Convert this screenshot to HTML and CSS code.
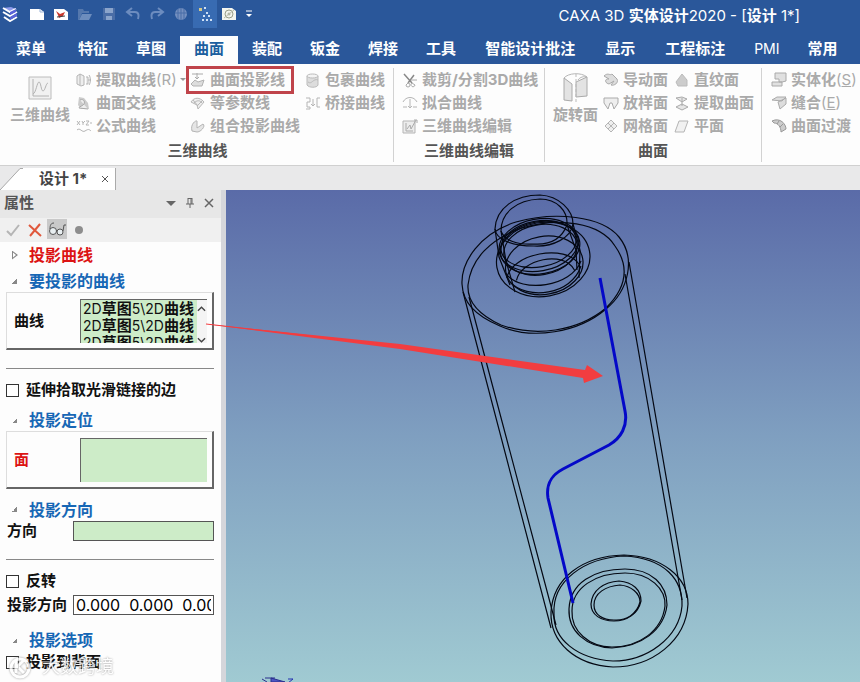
FILE: index.html
```
<!DOCTYPE html>
<html lang="zh-CN">
<head>
<meta charset="utf-8">
<title>CAXA 3D 实体设计2020</title>
<link rel="stylesheet" href="styles.css">
</head>
<body>
<header class="top">
  <div class="titlebar">
    <div class="quick">
      <svg class="logo" viewBox="0 0 16 16"><path d="M1 2l7 4 6-3-5-2z" fill="#8e9bec"/><path d="M1 2l7 4 6-3M1 6l7 4 7-4M2 11l6 4 7-4" fill="none" stroke="#fff" stroke-width="2"/><path d="M8 6l6-3v3l-6 3zM8 11l7-4v3l-7 4z" fill="#5a63d8"/></svg>
      <button aria-label="新建"><svg viewBox="0 0 16 16"><path d="M1 3h10l4 3v8H1z" fill="#fff"/><path d="M11 3v3h4" fill="none" stroke="#9db4d8"/></svg></button>
      <button aria-label="新建图纸"><svg viewBox="0 0 16 16"><path d="M1 3h10l4 3v8H1z" fill="#fff"/><path d="M3 5l4 3 5-2-2 4-4 2-1-3z" fill="#c8372d"/><path d="M4 11l8-1" stroke="#444"/></svg></button>
      <button aria-label="打开"><svg viewBox="0 0 16 16"><path d="M1 14V3h5l1 2h5v2H5l-3 7z" fill="#5578ad"/><path d="M5 8h10l-3 6H2z" fill="#6d8dbd"/></svg></button>
      <button aria-label="保存"><svg viewBox="0 0 16 16"><path d="M2 2h12v12H2z" fill="#4a6da6"/><path d="M4 2h8v5H4zM5 10h6v4H5z" fill="#8ba4cb"/></svg></button>
      <button aria-label="撤销"><svg viewBox="0 0 16 16"><path d="M7 2L2 6l5 4M2 6h8c4 0 4 4 3 7" fill="none" stroke="#6c8cbf" stroke-width="2"/></svg></button>
      <button aria-label="重做"><svg viewBox="0 0 16 16"><path d="M9 2l5 4-5 4M14 6H6c-4 0-4 4-3 7" fill="none" stroke="#6c8cbf" stroke-width="2"/></svg></button>
      <button aria-label="渲染"><svg viewBox="0 0 16 16"><circle cx="8" cy="8" r="6" fill="#7590c0"/><path d="M2 7h12M8 2v12M5 3v10M11 3v10" stroke="#486ca7"/></svg></button>
      <button class="lit" aria-label="捕捉"><svg viewBox="0 0 16 16"><path d="M2 2h3v3H2z" fill="#d5c98a"/><path d="M7 1h2v2H7zM9 6h2v2H9zM6 9h2v2H6zM11 9h2v2h-2zM5 13h2v2H5zM9 13h2v2H9zM13 13h2v2h-2z" fill="#cfe0f5"/></svg></button>
      <button aria-label="图纸"><svg viewBox="0 0 16 16"><path d="M1 2h10l4 3v9H1z" fill="#f4f5ee"/><circle cx="8" cy="8" r="4" fill="none" stroke="#9ba08c"/><circle cx="8" cy="8" r="1" fill="none" stroke="#9ba08c"/><path d="M3 12l10-8" stroke="#b9bca9"/></svg></button>
      <button class="more" aria-label="更多"><svg viewBox="0 0 16 16"><path d="M5 5h6" stroke="#fff" stroke-width="1"/><path d="M5 8h6l-3 3z" fill="#fff"/></svg></button>
    </div>
    <h1>CAXA 3D <b>实体设计</b>2020 - [<b>设计</b> 1*]</h1>
  </div>
  <nav class="tabs">
    <a href="#" class="menu">菜单</a><a href="#">特征</a><a href="#">草图</a><a href="#" class="on">曲面</a><a href="#">装配</a><a href="#">钣金</a><a href="#">焊接</a><a href="#">工具</a><a href="#" class="wide">智能设计批注</a><a href="#" class="wide">显示</a><a href="#" class="wide">工程标注</a><a href="#" class="latin">PMI</a><a href="#">常用</a>
  </nav>
</header>

<section class="ribbon">
  <div class="group g1">
    <div class="tools">
      <button class="big"><svg viewBox="0 0 24 24"><path d="M1 1h22v22H1z" fill="#f1f1f1" stroke="#bcbcbc"/><path d="M5 3v17h16M5 18c3-1 4-12 6-12s2 9 4 9 3-8 5-8" fill="none" stroke="#b2b2b2"/></svg>三维曲线</button>
      <div class="col c1">
        <button><svg viewBox="0 0 16 16"><path d="M1 4l3-2 4 2v9l-3 1-4-2zM4 2v11M10 5h2v7h-2M12 8h3M13 3c2 3 2 7 0 10" fill="#eee" stroke="#b5b5b5"/></svg>提取曲线<i>(R)</i><span class="drop"></span></button>
        <button><svg viewBox="0 0 16 16"><path d="M3 2l5 1 4 5 1 6H5l-3-4z" fill="#ccc"/><path d="M4 5c4-2 6 3 3 5s-4 2-4 3l9 1" fill="#eee" stroke="#aaa"/></svg>曲面交线</button>
        <button><svg viewBox="0 0 16 16"><path d="M1 3l3 4M4 3L1 7M6 3l1 2 2-2M7 5v2M10 3h3l-3 4h3M14 5h2M1 12c3-3 5 3 8 1s4-2 6 0" fill="none" stroke="#b5b5b5"/></svg>公式曲线</button>
      </div>
      <div class="col c2">
        <button class="marked"><svg viewBox="0 0 16 16"><path d="M2 2h11M7 1v6M5 5l2 2 2-2" fill="none" stroke="#aaa"/><path d="M1 12l4-4 3 2 6-2-2 6H3z" fill="#ddd" stroke="#b2b2b2"/></svg>曲面投影线</button>
        <button><svg viewBox="0 0 16 16"><path d="M1 7c3-5 9-5 13 0l-6 7-1-4zM3 5l5 6M13 5l-6 6M4 8c3-3 6-3 8 0" fill="#eee" stroke="#b8b8b8"/></svg>等参数线</button>
        <button><svg viewBox="0 0 16 16"><path d="M2 13c-2-7 4-11 5-10v7l6-4c3 2-2 8-6 8z" fill="#e5e5e5" stroke="#b5b5b5"/></svg>组合投影曲线</button>
      </div>
      <div class="col c3">
        <button><svg viewBox="0 0 16 16"><path d="M2 4v9c2 3 10 3 11 0V4" fill="#ddd" stroke="#bbb"/><ellipse cx="7.500" cy="4" rx="5.500" ry="2" fill="#f4f4f4" stroke="#bbb"/><path d="M3 10c4 3 5-4 10-2" fill="none" stroke="#bbb"/></svg>包裹曲线</button>
        <button><svg viewBox="0 0 16 16"><path d="M1 3h4v4H2v5h3v2H1M15 3h-3v9h3M8 4v7M6 9l2 2 2-2" fill="none" stroke="#b5b5b5"/></svg>桥接曲线</button>
      </div>
    </div>
    <h2>三维曲线</h2>
  </div>
  <div class="group g2">
    <div class="tools">
      <div class="col">
        <button><svg viewBox="0 0 16 16"><path d="M2 2l8 9M12 3L6 11" stroke="#888" stroke-width="1.500"/><path d="M10 11a2 2 0 1 0 3 2zM6 11a2 2 0 1 1-2 2zM9 8h6" fill="none" stroke="#aaa"/></svg>裁剪/分割3D曲线</button>
        <button><svg viewBox="0 0 16 16"><path d="M1 7c3-6 11-6 14 0M8 4v9M6 11l2 2 2-2M1 12h4M11 12h4" fill="none" stroke="#b5b5b5"/></svg>拟合曲线</button>
        <button><svg viewBox="0 0 16 16"><path d="M1 3h12v12H1z" fill="#ececec" stroke="#b5b5b5"/><path d="M4 5v8h7M5 11l3-4 1 4 5-9M12 2h3v3" fill="none" stroke="#aaa"/></svg>三维曲线编辑</button>
      </div>
    </div>
    <h2>三维曲线编辑</h2>
  </div>
  <div class="group g3">
    <div class="tools">
      <button class="big"><svg class="tall" viewBox="0 0 26 30"><path d="M1 5v22l8 1V11zM13 9l11-5v19l-11 1z" fill="#e3e3e3" stroke="#aaa"/><path d="M1 5c4-5 17-6 23-1-3-1-7 0-9 3" fill="none" stroke="#b5b5b5"/><path d="M13 1v28" stroke="#bbb" stroke-dasharray="3 2"/></svg>旋转面</button>
      <div class="col c4">
        <button><svg viewBox="0 0 16 16"><path d="M1 4c4-4 6 0 8-2l5 5c2 4-3 7-6 6l3-4-5 3c-5-1-4-6 0-5z" fill="#ddd" stroke="#aaa"/></svg>导动面</button>
        <button><svg viewBox="0 0 16 16"><path d="M1 3h14v5l-4 6-2-6H7l-2 6-4-6z" fill="#eee" stroke="#aaa"/></svg>放样面</button>
        <button><svg viewBox="0 0 16 16"><path d="M8 2l6 6-6 6-6-6zM5 5l6 6M11 5l-6 6" fill="#eee" stroke="#b5b5b5"/></svg>网格面</button>
      </div>
      <div class="col c5">
        <button><svg viewBox="0 0 16 16"><path d="M2 10l6-8 5 6v6H4z" fill="#ccc" stroke="#bbb"/></svg>直纹面</button>
        <button><svg viewBox="0 0 16 16"><path d="M2 3l6-1 5 2-5 3zM2 12l6-3 6 3-6 3zM8 3v8" fill="#e6e6e6" stroke="#aaa"/></svg>提取曲面</button>
        <button><svg viewBox="0 0 16 16"><path d="M5 3h9l-4 11H1z" fill="#f1f1f1" stroke="#b5b5b5"/></svg>平面</button>
      </div>
    </div>
    <h2>曲面</h2>
  </div>
  <div class="group g4">
    <div class="tools">
      <div class="col">
        <button><svg viewBox="0 0 16 16"><path d="M4 1h11v8l-4 1H8V7H4zM1 10h10v4H1z" fill="#e0e0e0" stroke="#aaa"/></svg>实体化<i>(<u>S</u>)</i></button>
        <button><svg viewBox="0 0 16 16"><path d="M1 5l5-3h9l-4 4zM7 7l8-4v6l-6 5z" fill="#ddd" stroke="#aaa"/></svg>缝合<i>(<u>E</u>)</i></button>
        <button><svg viewBox="0 0 16 16"><path d="M1 3c8-4 14 3 14 8l-5 3c0-5-3-9-7-9zM8 3L6 6M12 6L9 9" fill="#ccc" stroke="#999"/></svg>曲面过渡</button>
      </div>
    </div>
  </div>
</section>

<div class="docs">
  <div class="doc"><svg class="slant" viewBox="0 0 23 22"><path d="M0 22L20 1h3v21z" fill="#fff"/><path d="M0 22L20 .5h3" fill="none" stroke="#aaa"/></svg><span>设计 1*</span><button aria-label="关闭文档"><svg viewBox="0 0 8 8"><path d="M1 1l6 6M7 1L1 7" stroke="#555"/></svg></button></div>
</div>

<main class="work">
  <aside class="panel">
    <div class="phead">
      <h2>属性</h2>
      <button aria-label="菜单"><svg viewBox="0 0 10 10"><path d="M0 3h10L5 8z" fill="#666"/></svg></button>
      <button aria-label="固定"><svg viewBox="0 0 10 10"><path d="M3 0v6M3 .5h4M7 0v6M6 0v6M1 6h8M5 6v4" fill="none" stroke="#666"/></svg></button>
      <button aria-label="关闭"><svg viewBox="0 0 10 10"><path d="M1 1l8 8M9 1L1 9" stroke="#666" stroke-width="1.500"/></svg></button>
    </div>
    <div class="pbar">
      <button aria-label="确定"><svg viewBox="0 0 20 20"><path d="M4 11l4 4 8-10" fill="none" stroke="#b5b5b5" stroke-width="2"/></svg></button>
      <button aria-label="取消"><svg viewBox="0 0 20 20"><path d="M4 5l12 11M15 4L5 16" stroke="#e0583c" stroke-width="2"/></svg></button>
      <button class="pressed" aria-label="预览"><svg viewBox="0 0 20 20"><circle cx="6" cy="12" r="3.500" fill="#e8eef0" stroke="#555"/><circle cx="13" cy="13" r="3" fill="#e8eef0" stroke="#555"/><path d="M3 10c0-4 1-6 4-6M16 12l1-6 2 0M9 12l1 0" fill="none" stroke="#555"/></svg></button>
      <button aria-label="应用"><svg viewBox="0 0 20 20"><circle cx="10" cy="10" r="4" fill="#8d8d8d"/></svg></button>
    </div>
    <form class="props">
      <h3 class="closed red">投影曲线</h3>
      <h3>要投影的曲线</h3>
      <fieldset class="box">
        <label id="curves">曲线</label>
        <div class="list" role="listbox" aria-labelledby="curves" tabindex="0">
          <div class="items"><div>2D<b>草图</b>5\2D<b>曲线</b></div><div>2D<b>草图</b>5\2D<b>曲线</b></div><div>2D<b>草图</b>5\2D<b>曲线</b></div></div>
          <div class="scroll"><svg viewBox="0 0 10 6"><path d="M1 5l4-4 4 4" fill="none" stroke="#444" stroke-width="1.500"/></svg><svg viewBox="0 0 10 6"><path d="M1 1l4 4 4-4" fill="none" stroke="#444" stroke-width="1.500"/></svg></div>
        </div>
      </fieldset>
      <hr>
      <label class="check"><input type="checkbox">延伸拾取光滑链接的边</label>
      <h3>投影定位</h3>
      <fieldset class="box">
        <label class="red" for="face">面</label>
        <textarea class="face" id="face"></textarea>
      </fieldset>
      <h3 class="gap">投影方向</h3>
      <div class="field"><label for="dir">方向</label><input class="green" id="dir" type="text"></div>
      <hr>
      <label class="check tight"><input type="checkbox">反转</label>
      <div class="field"><label for="vec">投影方向</label><input id="vec" type="text" value="0.000  0.000  0.000"></div>
      <h3 class="gap options">投影选项</h3>
      <label class="check tight"><input type="checkbox">投影到背面</label>
    </form>
    <div class="mark"><svg viewBox="0 0 26 26"><circle cx="12" cy="14" r="9" fill="none" stroke="#fff" stroke-width="3"/><path d="M8 7v12M9 13l7-7M10 13l6 6" stroke="#fff" stroke-width="3"/></svg>大数跨境</div>
  </aside>
  <div class="view">
    <svg class="scene" viewBox="226 190 634 492" preserveAspectRatio="xMinYMin slice">
      <g fill="none" stroke="#040813" stroke-width="1.200">
        <path d="M462 284C461 262 480 233 516 222C555 211 602 216 619 237C636 258 629 290 606 309C578 333 532 340 500 326C474 315 463 302 462 284z"/>
        <path d="M468 285C471 259 490 239 522 228C558 217 600 222 615 246C630 267 626 288 606 308C577 332 535 337 501 325C477 314 467 301 468 285z"/>
        <path d="M495 229C496 208 515 195 540 195C559 196 573 210 573 224C571 238 553 247 534 246C513 246 496 240 495 229z"/>
        <path d="M501 231C501 213 516 200 540 199C557 199 568 211 567 225C562 238 551 245 534 244C516 245 504 240 501 231z"/>
        <g transform="rotate(-10 539 247)">
          <ellipse cx="539" cy="245" rx="40" ry="26"/><ellipse cx="540" cy="248" rx="40" ry="26"/><ellipse cx="540" cy="250" rx="37" ry="25"/><ellipse cx="539" cy="244" rx="38" ry="23"/>
          <ellipse cx="541" cy="260" rx="47" ry="37"/><ellipse cx="541" cy="266" rx="39" ry="29"/>
          <path d="M502 272c8-23 64-25 74 0M511 276c8-20 52-22 59 0M502 268c12 22 62 24 76 0M504 276c14 22 59 24 73-3"/>
        </g>
        <path d="M495 229l4 28 11 28M501 231l5 30 9 31M573 224l7 26-1 28M567 225l9 25 1 20"/>
        <path d="M463 292L551 628M469 297L556 625M629 262L687 598M625 274L682 600"/>
        <path d="M551 612C553 579 581 556 624 555C662 556 688 577 688 604C686 641 652 667 613 667C575 665 550 642 551 612z"/>
        <path d="M554 614C552 581 584 558 624 556C665 558 683 580 682 606C679 638 647 661 613 661C577 659 553 639 554 614z"/>
        <path d="M569 609C570 583 594 569 625 569C652 569 667 585 667 605C664 631 640 647 612 648C586 647 568 631 569 609z"/>
        <path d="M572 611C572 588 595 573 625 573C650 573 666 589 665 606C662 631 639 647 612 647C589 647 571 631 572 611z"/>
        <path d="M591 604C592 590 604 582 619 581C633 582 641 590 641 601C638 614 627 621 614 621C601 621 591 615 591 604z"/>
        <path d="M594 605C594 593 606 586 620 585C631 586 640 593 640 602C637 614 626 621 614 620C603 620 594 615 594 605z"/>
      </g>
      <path d="M600 278L625 411C628 426 621 438 609 445L563 469C550 476 546 485 548 498L573 603" fill="none" stroke="#0408c8" stroke-width="3"/>
      <path d="M262 679l5 3M265 678h10M271 678l14 4h-14z" fill="#4c56c4" stroke="#2a2f8c"/><path d="M288 679h5l-5 4" fill="none" stroke="#2430b0"/>
    </svg>
  </div>
  <svg class="pointer" viewBox="0 190 860 492" preserveAspectRatio="xMinYMin slice"><path d="M206 324L400 344 585 370 587 365 603 376 584 383 583 378 400 349z" fill="#f23d40"/><path d="M206 324L400 346" stroke="#f23d40"/></svg>
</main>
</body>
</html>
```
FILE: styles.css
```
* { box-sizing: border-box; }
body {
  margin: 0;
  min-height: 100vh;
  display: flex;
  flex-direction: column;
  overflow: hidden;
  background: #e9e9ea;
  font: 15px/20px Inter, "Noto Sans CJK SC", sans-serif;
  color: #111;
}
h1, h2, h3 { margin: 0; font-size: 15px; }
button { margin: 0; padding: 0; border: 0; background: none; font: inherit; color: inherit; }
svg { display: block; flex: none; }
i { font-style: normal; font-weight: 400; }

.top { background: #2a579a; color: #fff; }
.titlebar { display: flex; justify-content: space-between; height: 36px; padding-right: 60px; }
.quick { display: flex; align-items: center; height: 28px; padding-left: 2px; }
.quick svg { width: 16px; height: 16px; }
.quick .logo { margin-right: 7px; }
.quick button { display: flex; align-items: center; justify-content: center; width: 24px; height: 28px; }
.quick .lit { background: #386bb2; }
.quick .more { width: 16px; }
.titlebar h1 { font-weight: 400; line-height: 32px; white-space: nowrap; }
.tabs { display: flex; height: 28px; padding-left: 2px; overflow: hidden; }
.tabs a { flex: none; padding: 0 14px; color: #fff; font-weight: 700; line-height: 26px; text-decoration: none; white-space: nowrap; }
.tabs .menu { padding-right: 18px; }
.tabs .wide { padding: 0 15px; }
.tabs .latin { font-weight: 400; font-size: 14px; }
.tabs .on { background: #fdfdfd; color: #1c5f9f; }

.ribbon { display: flex; height: 102px; padding-top: 4px; background: #fdfdfd; border-bottom: 1px solid #d0d0d0; color: #aaa; font-weight: 700; white-space: nowrap; overflow: hidden; }
.group { display: flex; flex: none; flex-direction: column; height: 94px; border-right: 1px solid #d2d2d2; }
.group h2 { margin-top: 4px; padding-right: 8px; color: #555; text-align: center; line-height: 18px; }
.tools { display: flex; height: 70px; }
.big { display: flex; flex-direction: column; align-items: center; gap: 5px; padding-top: 8px; }
.big svg { width: 24px; height: 24px; }
.big .tall { width: 26px; height: 30px; margin-top: -3px; margin-bottom: -3px; }
.col { display: flex; flex-direction: column; align-items: flex-start; }
.col button { display: flex; align-items: center; height: 23px; }
.col svg { width: 16px; height: 16px; margin-right: 4px; }
.g1 { width: 394px; padding-left: 10px; }
.g1 .c1 { width: 120px; padding-left: 6px; }
.c2 { width: 115px; }
.col .marked { position: relative; }
.marked::after { content: ""; position: absolute; inset: -2px -9px -3px -4px; border: 3px solid #c0444b; }
.drop { margin-left: 3px; border: 3px solid transparent; border-top-color: #999; border-bottom: 0; }
.g2 { width: 151px; padding-left: 8px; }
.g3 { width: 217px; padding-left: 8px; }
.c4 { width: 76px; padding-left: 5px; }
.g4 { flex: 1; padding-left: 9px; border-right: 0; }

.docs { height: 24px; padding-top: 2px; background: #e9e9ea; }
.doc { display: inline-flex; align-items: center; height: 22px; padding-right: 6px; background: linear-gradient(90deg, transparent 22px, #fff 22px); border-right: 1px solid #aaa; color: #444; font-weight: 700; }
.slant { width: 23px; height: 22px; margin-right: 16px; }
.doc span { width: 62px; }
.doc button svg { width: 8px; height: 8px; }

.work { position: relative; display: flex; flex: 1; min-height: 492px; }
.panel { position: relative; flex: none; width: 226px; background: #fdfdfd; border-right: 5px solid #d5d6db; overflow: hidden; }
.phead { display: flex; align-items: center; gap: 9px; height: 28px; padding: 0 7px 3px 4px; background: #e7e7e7; color: #555; }
.phead h2 { flex: 1; }
.phead svg { width: 10px; height: 10px; }
.pbar { display: flex; gap: 2px; height: 24px; padding: 1px 3px; background: #f0f0f0; }
.pbar svg { width: 20px; height: 20px; }
.pbar .pressed { height: 20px; background: #c9c9c9; }

.props { padding: 0 7px 0 6px; font-weight: 700; }
.props h3 { display: flex; align-items: center; height: 26px; color: #1767b5; font-size: 16px; }
.props h3::before { content: ""; width: 5px; height: 5px; margin: 0 12px 0 6px; background: linear-gradient(135deg, transparent 50%, #888 50%); }
.props h3.closed::before { width: 6px; height: 9px; margin-right: 11px; background: linear-gradient(#888, #888); clip-path: polygon(0 0, 100% 50%, 0 100%, 0 0, 1px 2px, 1px 7px, 4px 50%, 1px 2px); }
.props h3.gap { margin-top: 9px; height: 23px; }
.props h3.options { margin-top: 14px; height: 22px; }
.props .red { color: #dc1414; }
.box { display: flex; align-items: center; height: 58px; margin: 0; padding: 0 5px 0 7px; border: 1px solid #ddd; border-right: 2px solid #666; border-bottom: 2px solid #666; }
.box label { width: 66px; }
.props h3 + .box { margin-top: -2px; }
.list { display: flex; flex: 1; height: 44px; border-top: 1px solid #666; border-left: 1px solid #666; background: #cdecc8; overflow: hidden; }
.items { flex: 1; width: 0; padding-left: 2px; overflow: hidden; line-height: 17px; font-weight: 400; white-space: nowrap; font-size: 14px; }
.items b { font-size: 15px; }
.items div { height: 17px; }
.scroll { display: flex; flex-direction: column; justify-content: space-between; width: 10px; padding: 6px 1px 0 0; background: #f4f4f4; }
.scroll svg { width: 9px; height: 6px; }
.face { display: block; flex: 1; width: 0; height: 44px; margin: 0; padding: 2px; resize: none; background: #cdecc8; border: 0 solid #666; border-width: 1px 0 0 1px; border-radius: 0; }
hr { height: 1px; margin: 18px 0 10px; border: 0; background: #888; }
.check { display: flex; align-items: center; height: 22px; margin-bottom: 6px; }
.check.tight { margin-bottom: 3px; }
.check input { appearance: none; width: 13px; height: 13px; margin: 0 7px 0 0; border: 1px solid #333; background: #fff; }
.field { display: flex; align-items: center; height: 20px; margin-left: 1px; white-space: nowrap; }
.field label { width: 66px; }
.field input { flex: 1; width: 0; height: 20px; padding: 0 2px; border: 1px solid #555; border-radius: 0; background: #fff; font: 16px/18px Inter, sans-serif; white-space: pre; }
.field .green { background: #cdecc8; }
.mark { position: absolute; left: 8px; bottom: 2px; display: flex; align-items: center; gap: 8px; color: #fff; font-size: 18px; line-height: 26px; text-shadow: 0 0 2px #777; opacity: .8; }
.mark svg { width: 26px; height: 26px; filter: drop-shadow(0 0 1px #888); }

.view { flex: 1; min-width: 0; background: linear-gradient(#5a6ba8, #7f9fc0 50%, #a0cad2); overflow: hidden; }
.scene { width: 100%; height: 100%; }
.pointer { position: absolute; top: 0; left: 0; width: 100%; height: 100%; pointer-events: none; }
```
